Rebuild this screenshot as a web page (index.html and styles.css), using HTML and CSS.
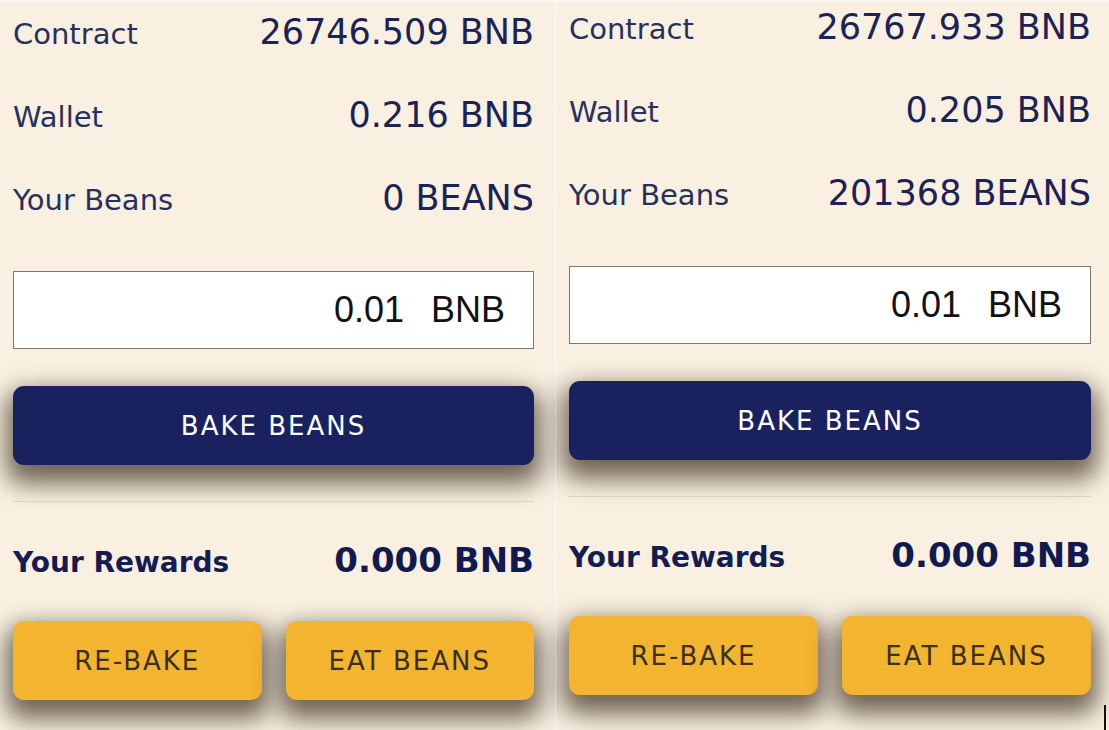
FILE: index.html
```html
<!DOCTYPE html>
<html lang="en">
<head>
    <meta charset="UTF-8">
    <meta name="viewport" content="width=device-width, initial-scale=1.0">
    <title>Bake Beans</title>
    <link rel="stylesheet" href="styles.css">
</head>
<body>

    <!-- Before -->
    <div class="panel">
        <div class="stat-row">
            <span class="stat-label">Contract</span>
            <span class="stat-value">26746.509 BNB</span>
        </div>
        <div class="stat-row">
            <span class="stat-label">Wallet</span>
            <span class="stat-value">0.216 BNB</span>
        </div>
        <div class="stat-row">
            <span class="stat-label">Your Beans</span>
            <span class="stat-value">0 BEANS</span>
        </div>

        <div class="amount-box">
            <input type="text" class="amount-input" value="0.01">
            <span class="amount-unit">BNB</span>
        </div>

        <button class="btn-bake">BAKE BEANS</button>

        <hr class="divider">

        <div class="stat-row rewards-row">
            <span class="rewards-label">Your Rewards</span>
            <span class="rewards-value">0.000 BNB</span>
        </div>

        <div class="action-row">
            <button class="btn-yellow">RE-BAKE</button>
            <button class="btn-yellow">EAT BEANS</button>
        </div>
    </div>

    <!-- After -->
    <div class="panel panel-after">
        <div class="stat-row">
            <span class="stat-label">Contract</span>
            <span class="stat-value">26767.933 BNB</span>
        </div>
        <div class="stat-row">
            <span class="stat-label">Wallet</span>
            <span class="stat-value">0.205 BNB</span>
        </div>
        <div class="stat-row">
            <span class="stat-label">Your Beans</span>
            <span class="stat-value">201368 BEANS</span>
        </div>

        <div class="amount-box">
            <input type="text" class="amount-input" value="0.01">
            <span class="amount-unit">BNB</span>
        </div>

        <button class="btn-bake">BAKE BEANS</button>

        <hr class="divider">

        <div class="stat-row rewards-row">
            <span class="rewards-label">Your Rewards</span>
            <span class="rewards-value">0.000 BNB</span>
        </div>

        <div class="action-row">
            <button class="btn-yellow">RE-BAKE</button>
            <button class="btn-yellow">EAT BEANS</button>
        </div>

        <span class="caret"></span>
    </div>

</body>
</html>
```

FILE: styles.css
```css
body {
    font-family: 'DejaVu Sans', sans-serif;
    background-color: #faf0e2;
    margin: 0;
    padding: 0;
    display: flex;
    height: 730px;
    overflow: hidden;
}
.panel {
    position: relative;
    width: 555px;
    box-sizing: border-box;
    padding: 8px 21px 0 13px;
    border-top: 2px solid #fcf8f1;
    display: flex;
    flex-direction: column;
}
.panel-after {
    flex: 1;
    border-left: 1px solid #fdf9f3;
    padding-right: 19px;
    padding-top: 3px;
}
.stat-row {
    display: flex;
    justify-content: space-between;
    align-items: baseline;
    height: 44px;
    line-height: 44px;
    margin-bottom: 39px;
}
.stat-label {
    font-size: 29px;
    color: #27305b;
}
.stat-value {
    font-size: 35px;
    color: #1b2356;
}
.amount-box {
    display: flex;
    align-items: center;
    height: 78px;
    box-sizing: border-box;
    margin-top: 12px;
    padding-right: 28px;
    background-color: #ffffff;
    border: 1px solid #7c7870;
    font-family: 'Liberation Sans', Arial, sans-serif;
    font-size: 36px;
    color: #111111;
}
.amount-input {
    flex: 1;
    min-width: 0;
    border: none;
    outline: none;
    background: transparent;
    text-align: right;
    font-family: inherit;
    font-size: inherit;
    color: inherit;
    padding: 0;
}
.amount-unit {
    margin-left: 27px;
}
button {
    font-family: 'DejaVu Sans', sans-serif;
    font-size: 26px;
    letter-spacing: 2px;
    border: none;
    border-radius: 11px;
    height: 79px;
    cursor: pointer;
    box-shadow: 0 12px 24px 7px rgba(52, 42, 28, 0.7);
}
.btn-bake {
    margin-top: 37px;
    width: 100%;
    background-color: #19215e;
    color: #ffffff;
}
.divider {
    margin: 36px 0 0 0;
    border: none;
    border-top: 1px solid #d9d1c4;
}
.rewards-row {
    margin-top: 36px;
    margin-bottom: 0;
}
.rewards-label {
    font-size: 28px;
    font-weight: bold;
    color: #141d52;
}
.rewards-value {
    font-size: 34px;
    font-weight: bold;
    color: #111a4f;
}
.action-row {
    display: flex;
    gap: 24px;
    margin-top: 39px;
}
.btn-yellow {
    flex: 1;
    background-color: #f3b42f;
    color: #3a2f22;
}
.caret {
    position: absolute;
    right: 4px;
    bottom: 0;
    width: 2px;
    height: 25px;
    background-color: #111111;
}
```
